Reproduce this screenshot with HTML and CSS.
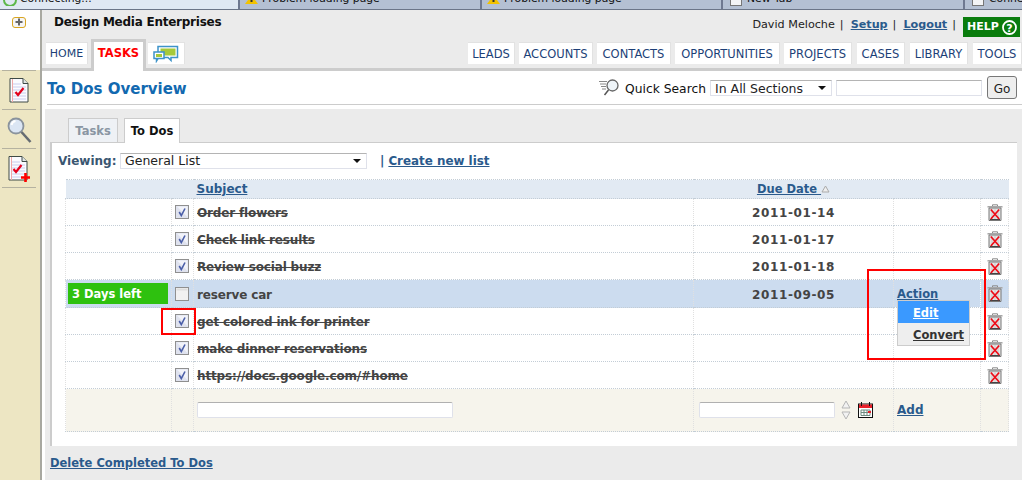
FILE: index.html
```html
<!DOCTYPE html>
<html lang="en">
<head>
<meta charset="utf-8">
<title>To Dos Overview</title>
<link rel="stylesheet" href="styles.css">
</head>
<body>
<svg class="defs" width="0" height="0" aria-hidden="true">
  <defs>
    <symbol id="trash" viewBox="0 0 16 17">
      <path d="M5.500 2V.8h5V2" fill="none" stroke="#8a8a8a"/>
      <rect x=".5" y="2" width="15" height="1.600" fill="#a8a8a8"/>
      <path d="M2 4h12v12.500H2z" fill="#e6e6e6" stroke="#777"/>
      <path d="M5 5v10M8 5v10M11 5v10" stroke="#cacaca"/>
      <path d="M3 15.500h10" stroke="#444"/>
      <path d="M3.800 5.500l8.400 9.500M12.200 5.500l-8.400 9.500" stroke="#ee0b16" stroke-width="1.700"/>
    </symbol>
    <symbol id="check" viewBox="0 0 14 14">
      <rect x=".5" y=".5" width="13" height="13" fill="#dfe2ee" stroke="#8f8f8f"/>
      <path d="M2 1.500h10.500v10.500z" fill="#f2f3f9"/>
      <path d="M4.200 7l2.100 3.500L10 3.500" fill="none" stroke="#4a5ea8" stroke-width="1.600"/>
    </symbol>
    <symbol id="uncheck" viewBox="0 0 14 14">
      <rect x=".5" y=".5" width="13" height="13" fill="#f1f1f1" stroke="#8f8f8f"/>
      <path d="M1.500 1.500h11v2h-11z" fill="#dedede"/>
    </symbol>
    <symbol id="sheet" viewBox="0 0 20 25">
      <path d="M1 .5h13l5 5v18.500H1z" fill="#fbfbff" stroke="#3f4a46"/>
      <path d="M14 .5v5h5" fill="#dfe4e4" stroke="#3f4a46"/>
      <path d="M3 6h9M3 9h14M3 12h14M3 15h14M3 18h14M3 21h14" stroke="#c9cdee"/>
      <path d="M3.500 1v23" stroke="#f0a8a8"/>
    </symbol>
  </defs>
</svg>

<div class="browser-tabs">
  <div class="btab btab-active">
    <svg class="b-icon" viewBox="0 0 14 6"><path d="M1 0a6 6 0 0 0 12 0" fill="none" stroke="#5cb84a" stroke-width="2"/></svg>
    <span>Connecting...</span>
  </div>
  <div class="btab btab-wide">
    <svg class="b-warn" viewBox="0 0 13 4"><path d="M3 0h7l3 4H0z" fill="#f2c200"/><rect x="5.500" width="2" height="2" fill="#333"/></svg>
    <span>Problem loading page</span>
  </div>
  <div class="btab">
    <svg class="b-warn" viewBox="0 0 13 4"><path d="M3 0h7l3 4H0z" fill="#f2c200"/><rect x="5.500" width="2" height="2" fill="#333"/></svg>
    <span>Problem loading page</span>
  </div>
  <div class="btab btab-wide">
    <i class="b-page"></i>
    <span>New Tab</span>
  </div>
  <div class="btab btab-last">
    <i class="b-page"></i>
    <span>Connecting...</span>
  </div>
</div>

<div class="app">
  <aside class="sidebar">
    <div class="side-top">
      <span class="plus-box"><svg viewBox="0 0 14 10" width="14" height="10"><path d="M3.500 5h7M7 1.500v7" stroke="#666" stroke-width="2"/></svg></span>
    </div>
    <div class="side-item">
      <svg width="20" height="25"><use href="#sheet"/><path d="M6.500 14l2.500 3 5.500-7" fill="none" stroke="#e3001b" stroke-width="2.200"/></svg>
    </div>
    <div class="side-item">
      <svg width="25" height="27" viewBox="0 0 25 27"><circle cx="9" cy="9" r="7.500" fill="#dbe6f4" stroke="#8a939c" stroke-width="1.800"/><path d="M4.500 8a5 5 0 0 1 4-4" fill="none" stroke="#fff" stroke-width="2"/><path d="M14.500 15l9 10" stroke="#666c72" stroke-width="2.600"/></svg>
    </div>
    <div class="side-item">
      <svg width="20" height="25" class="side-new"><use href="#sheet"/><path d="M5.500 13l2.500 3 5.500-7" fill="none" stroke="#e3001b" stroke-width="2.200"/></svg>
      <svg class="side-plus" width="9" height="9" viewBox="0 0 9 9"><path d="M4.500 0v9M0 4.500h9" stroke="#f00" stroke-width="2.600"/></svg>
    </div>
  </aside>

  <main class="main">
    <header class="head">
      <div class="head-top">
        <div class="company">Design Media Enterprises</div>
        <div class="user">
          <span>David Meloche</span><span class="pipe">|</span>
          <a href="#" class="link">Setup</a><span class="pipe">|</span>
          <a href="#" class="link">Logout</a><span class="pipe">|</span>
          <a href="#" class="help">HELP <svg width="15" height="15" viewBox="0 0 15 15"><circle cx="7.500" cy="7.500" r="6.500" fill="none" stroke="#fff" stroke-width="1.800"/><text x="7.500" y="11.500" text-anchor="middle" class="help-q">?</text></svg></a>
        </div>
      </div>
      <nav class="nav">
        <div class="nav-left">
          <a href="#" class="nt nt-home">HOME</a>
          <a href="#" class="nt-current">TASKS</a>
          <a href="#" class="nt nt-chat">
            <svg width="26" height="18" viewBox="0 0 26 18"><path d="M5 1.500h19.500v11H18v3l-3-3H5z" fill="#fff" stroke="#3d93c9" stroke-width="1.500"/><rect x="7.500" y="3.500" width="15" height="7" fill="#a6c93a"/><path d="M1 7h10v6.500H5l-1.500 2.500v-2.500H1z" fill="#fff" stroke="#3d93c9" stroke-width="1.500"/><rect x="3" y="9" width="6" height="3" fill="#a6c93a"/></svg>
          </a>
        </div>
        <div class="nav-right">
          <a href="#" class="nt w-leads">LEADS</a>
          <a href="#" class="nt w-accounts">ACCOUNTS</a>
          <a href="#" class="nt w-contacts">CONTACTS</a>
          <a href="#" class="nt w-opps">OPPORTUNITIES</a>
          <a href="#" class="nt w-projects">PROJECTS</a>
          <a href="#" class="nt w-cases">CASES</a>
          <a href="#" class="nt w-library">LIBRARY</a>
          <a href="#" class="nt w-tools">TOOLS</a>
        </div>
      </nav>
    </header>

    <section class="titlebar">
      <h1>To Dos Overview</h1>
      <div class="quick">
        <svg class="q-icon" width="21" height="17" viewBox="0 0 21 17"><circle cx="13.500" cy="6.500" r="5.500" fill="#eef4f8" stroke="#666" stroke-width="1.300"/><path d="M9.500 11l-4 5" stroke="#555" stroke-width="1.500"/><path d="M0 2.500h8M1 5h6M2 7.500h5M3 10h4" stroke="#888"/></svg>
        <span class="q-label">Quick Search</span>
        <div class="fake-select q-select"><span>In All Sections</span><i class="caret"></i></div>
        <input class="q-input" type="text">
        <button class="go" type="button">Go</button>
      </div>
    </section>

    <section class="content">
      <div class="subtabs">
        <a href="#" class="st">Tasks</a>
        <a href="#" class="st st-on">To Dos</a>
      </div>
      <div class="panel">
        <div class="viewing">
          <span class="v-label">Viewing:</span>
          <div class="fake-select v-select"><span>General List</span><i class="caret"></i></div>
          <span class="v-sep">|</span>
          <a href="#" class="link create">Create new list</a>
        </div>

        <table class="todos">
          <colgroup>
            <col class="c1"><col class="c2"><col class="c3"><col class="c4"><col class="c5"><col class="c6">
          </colgroup>
          <thead>
            <tr>
              <th></th><th></th>
              <th class="left"><a href="#" class="link strong">Subject</a></th>
              <th><a href="#" class="link due">Due Date <svg width="9" height="8" viewBox="0 0 9 8"><path d="M4.500 1L8 7H1z" fill="#eee" stroke="#aaa"/></svg></a></th>
              <th></th><th></th>
            </tr>
          </thead>
          <tbody>
            <tr>
              <td></td><td class="mid"><svg class="cb" width="14" height="14"><use href="#check"/></svg></td>
              <td class="subj done">Order flowers</td><td class="date">2011-01-14</td><td></td>
              <td class="mid"><svg class="tr" width="16" height="17"><use href="#trash"/></svg></td>
            </tr>
            <tr>
              <td></td><td class="mid"><svg class="cb" width="14" height="14"><use href="#check"/></svg></td>
              <td class="subj done">Check link results</td><td class="date">2011-01-17</td><td></td>
              <td class="mid"><svg class="tr" width="16" height="17"><use href="#trash"/></svg></td>
            </tr>
            <tr>
              <td></td><td class="mid"><svg class="cb" width="14" height="14"><use href="#check"/></svg></td>
              <td class="subj done">Review social buzz</td><td class="date">2011-01-18</td><td></td>
              <td class="mid"><svg class="tr" width="16" height="17"><use href="#trash"/></svg></td>
            </tr>
            <tr class="hot">
              <td class="days-cell"><div class="days">3 Days left</div></td>
              <td class="mid"><svg class="cb" width="14" height="14"><use href="#uncheck"/></svg></td>
              <td class="subj">reserve car</td><td class="date">2011-09-05</td>
              <td class="action">
                <a href="#" class="link due">Action</a>
                <div class="menu">
                  <a href="#" class="menu-item menu-on">Edit</a>
                  <a href="#" class="menu-item">Convert</a>
                </div>
              </td>
              <td class="mid"><svg class="tr" width="16" height="17"><use href="#trash"/></svg></td>
            </tr>
            <tr>
              <td></td><td class="mid"><svg class="cb" width="14" height="14"><use href="#check"/></svg></td>
              <td class="subj done">get colored ink for printer</td><td class="date"></td><td></td>
              <td class="mid"><svg class="tr" width="16" height="17"><use href="#trash"/></svg></td>
            </tr>
            <tr>
              <td></td><td class="mid"><svg class="cb" width="14" height="14"><use href="#check"/></svg></td>
              <td class="subj done">make dinner reservations</td><td class="date"></td><td></td>
              <td class="mid"><svg class="tr" width="16" height="17"><use href="#trash"/></svg></td>
            </tr>
            <tr>
              <td></td><td class="mid"><svg class="cb" width="14" height="14"><use href="#check"/></svg></td>
              <td class="subj done">https://docs.google.com/#home</td><td class="date"></td><td></td>
              <td class="mid"><svg class="tr" width="16" height="17"><use href="#trash"/></svg></td>
            </tr>
            <tr class="addrow">
              <td></td><td></td>
              <td><input class="add-subj" type="text"></td>
              <td class="add-date">
                <input class="add-due" type="text">
                <svg class="swap" width="10" height="20" viewBox="0 0 10 20"><path d="M5 1L1 8h8zM1 12h8l-4 7z" fill="#f2f2f2" stroke="#b5b5b5"/></svg>
                <svg class="cal" width="15" height="16" viewBox="0 0 15 16"><rect x=".5" y="2" width="14" height="13.500" fill="#fff" stroke="#111"/><rect x="1" y="2.500" width="13" height="3.500" fill="#e8202a"/><path d="M3.500 0v4M11.500 0v4" stroke="#111"/><path d="M3 8h9v5.500H3zM3 10.500h9M6 8v5.500M9 8v5.500" fill="none" stroke="#6d8a80"/><rect x="10" y="9" width="3" height="2" fill="#e8202a"/></svg>
              </td>
              <td class="add-cell"><a href="#" class="link strong">Add</a></td>
              <td></td>
            </tr>
          </tbody>
        </table>
      </div>
      <div class="foot"><a href="#" class="link due">Delete Completed To Dos</a></div>
    </section>
  </main>
</div>

<div class="mark mark-check"></div>
<div class="mark mark-action"></div>
</body>
</html>
```

FILE: styles.css
```css
* { box-sizing: border-box; }
html, body { margin: 0; padding: 0; height: 480px; overflow: hidden; background: #ebebeb; }
body { position: relative; font-family: "DejaVu Sans", Verdana, sans-serif; font-size: 11px; color: #222; }
.defs { position: absolute; }
a { color: inherit; text-decoration: none; }

.browser-tabs { display: flex; height: 10px; overflow: hidden; background: #b4c0d3; border-bottom: 1px solid #6b7588; font-size: 10.800px; color: #111; }
.btab { flex: none; width: 241px; height: 9px; display: flex; align-items: flex-start; gap: 4px; padding-left: 5px; border-left: 2px solid #6e7890; white-space: nowrap; overflow: hidden; }
.btab span { display: block; margin-top: -9px; line-height: 16px; }
.btab-wide { width: 242px; }
.btab-active { width: 238px; padding-left: 3px; gap: 3px; border-left: 0; background: #dfe8f3; }
.btab-last { flex: 1; }
.b-icon { flex: none; width: 14px; height: 6px; }
.b-warn { flex: none; width: 13px; height: 4px; }
.b-page { display: block; flex: none; width: 12px; height: 6px; margin: 0 1px 0 2px; background: #f3f4f6; border: 1px solid #777; border-top: 0; }

.app { display: flex; height: 470px; }
.sidebar { flex: none; width: 42px; background: #ede6c3; border-right: 2px solid #a8a8a0; }
.side-top { height: 60px; background: #fff; padding: 7px 0 0 12px; }
.plus-box { display: block; width: 14px; height: 11px; border: 1px solid #d9a520; border-radius: 3px; background: #f5f5f5; line-height: 0; }
.plus-box svg { margin: -1px 0 0 -1px; }
.side-item { position: relative; height: 39px; margin: 0 4px 0 2px; border-top: 1px solid #b5b2a0; display: flex; justify-content: center; padding-top: 7px; }
.side-item:last-child { height: 40px; border-bottom: 1px solid #b5b2a0; }
.side-new { margin-left: -2px; }
.side-plus { position: absolute; left: 19px; top: 24px; }

.main { flex: 1; display: flex; flex-direction: column; min-width: 0; background: #fff; }
.head { height: 61px; background: #ebebeb; border-bottom: 3px solid #ccc; }
.head-top { display: flex; justify-content: space-between; height: 30px; padding: 5px 2px 0 12px; }
.company { font-weight: 700; font-size: 12px; letter-spacing: -.25px; color: #111; line-height: 14px; }
.user { display: flex; font-size: 11.200px; line-height: 14px; padding-top: 3px; color: #222; }
.pipe { margin: 0 7px 0 5px; }
.link { color: #2a5a8c; text-decoration: underline; font-weight: 700; }
.user .link { font-size: 11.200px; }
.strong { font-size: 12px; }
.create { font-size: 11.900px; }
.due { font-size: 11.500px; }
.help { display: flex; align-items: center; gap: 3px; width: 57px; height: 20px; margin: -1px 0 0 0; padding-left: 4px; background: #0a7c0d; color: #fff; text-decoration: none; font-weight: 700; font-size: 11px; }
.help-q { fill: #fff; font-size: 11px; font-weight: 700; font-family: "DejaVu Sans", sans-serif; }

.nav { display: flex; justify-content: space-between; align-items: flex-start; height: 28px; padding-left: 4px; }
.nav-left, .nav-right { display: flex; }
.nt { display: flex; align-items: center; justify-content: center; height: 22px; margin-top: 2px; background: #fff; border: 1px solid #e2e2e2; border-width: 1px 1px 0 0; color: #1c3f77; font-size: 11.500px; }
.nt-home { width: 42px; margin-right: 3px; font-size: 11px; }
.nt-current { display: flex; justify-content: center; width: 55px; height: 32px; padding-top: 4px; margin-top: -1px; background: #fff; border: 3px solid #ccc; border-bottom: 0; color: #f00; font-weight: 700; font-size: 11.500px; position: relative; }
.nt-chat { width: 37px; margin-left: 2px; }
.w-leads { width: 47px; margin-right: 4px; }
.w-accounts { width: 74px; margin-right: 4px; }
.w-contacts { width: 74px; margin-right: 4px; }
.w-opps { width: 105px; margin-right: 4px; }
.w-projects { width: 68px; margin-right: 5px; }
.w-cases { width: 48px; margin-right: 5px; }
.w-library { width: 58px; margin-right: 5px; }
.w-tools { width: 49px; }

.titlebar { display: flex; justify-content: space-between; align-items: center; height: 34px; margin: 0 0 0 5px; padding-right: 5px; border-bottom: 1px solid #ccc; }
h1 { margin: 3px 0 0; color: #1269b0; font-size: 15px; font-weight: 700; }
.quick { display: flex; align-items: center; gap: 4px; font-size: 12px; color: #111; }
.q-icon { margin-right: 1px; }
.q-label { font-size: 12.300px; padding-top: 2px; }
.fake-select { display: flex; justify-content: space-between; align-items: center; height: 16px; background: #fff; border: 1px solid #dfe1ea; border-top-color: #b4b4b4; padding: 0 5px 0 4px; font-size: 12.500px; color: #222; }
.q-select { width: 122px; padding-top: 1px; }
.v-select { width: 247px; }
.caret { width: 0; height: 0; border: 4px solid transparent; border-top: 4px solid #111; border-bottom: 0; }
.q-input { width: 146px; height: 16px; margin: 0; border: 1px solid #dfe1ea; border-top-color: #b4b4b4; background: #fff; }
.go { width: 30px; height: 23px; margin: 0 0 0 1px; padding: 3px 0 0; background: #eee; border: 1px solid #777; border-radius: 3px; font: 12px "DejaVu Sans", sans-serif; color: #222; }

.content { flex: 1; margin: 4px 0 0 3px; padding-left: 5px; background: #ebebeb; }
.subtabs { display: flex; gap: 6px; height: 33px; padding: 9px 0 0 18px; }
.st { display: flex; align-items: center; justify-content: center; width: 50px; height: 24px; background: #eef1f5; border: 1px solid #ccc; border-bottom: 0; color: #8a96a3; font-weight: 700; font-size: 11.500px; }
.st-on { position: relative; width: 56px; height: 25px; background: #fff; color: #111; z-index: 1; }
.panel { width: 967px; height: 304px; padding-top: 10px; background: #fff; border-left: 2px solid #ccc; border-top: 1px solid #ccc; }
.viewing { display: flex; align-items: center; height: 15px; padding-left: 6px; font-size: 12px; }
.v-label { width: 62px; font-weight: 700; color: #3a5670; }
.v-sep { margin: 0 4px 0 13px; color: #2a5a8c; font-weight: 700; }

.todos { width: 943px; margin: 11px 0 0 13px; border-collapse: collapse; table-layout: fixed; font-size: 12px; }
.c1 { width: 106px; } .c2 { width: 22px; } .c3 { width: 500px; } .c4 { width: 200px; } .c5 { width: 87px; } .c6 { width: 28px; }
.todos th, .todos td { padding: 0; border-style: dotted; border-width: 1px; border-color: #c3cdd6 #e0e0e0; height: 27px; }
.todos th { height: 19px; background: #e2eaf3; text-align: center; border-left: 0; border-right: 0; font-weight: 700; }
.todos th.left { text-align: left; padding-left: 3px; }
.todos th svg { vertical-align: 0; }
.todos .subj { padding: 2px 0 0 3px; font-weight: 700; color: #444; letter-spacing: -.15px; }
.done { text-decoration: line-through; }
.todos .date { padding-top: 2px; text-align: center; font-weight: 700; color: #444; letter-spacing: .6px; }
.mid { text-align: center; line-height: 0; }
.cb { vertical-align: middle; margin-right: 1px; }
.tr { vertical-align: middle; }
.hot td { background: #ccdcef; height: 28px; }
.todos .days-cell { padding: 0 0 0 2px; }
.days { height: 21px; line-height: 22px; width: 100px; padding-left: 4px; background: #2ec10f; color: #fff; font-weight: 700; font-size: 11.500px; }
.todos .action { position: relative; padding: 1px 0 0 3px; }
.menu { position: absolute; left: 3px; top: 20px; width: 73px; height: 46px; background: #eee; border: 1px solid #ccc; z-index: 2; }
.menu-item { display: block; height: 22px; line-height: 25px; padding-left: 15px; color: #333; text-decoration: underline; font-weight: 700; font-size: 11.500px; }
.menu-on { background: #3a99ff; color: #fff; }
.addrow td { height: 43px; background: #f6f4ec; }
.add-subj { display: block; width: 256px; height: 16px; margin: 0 0 0 3px; background: #fff; border: 1px solid #dfe1ea; border-top-color: #b0b0b0; border-radius: 2px; }
.todos .add-date { white-space: nowrap; line-height: 0; padding-left: 5px; }
.add-due { width: 136px; height: 16px; margin: 0; vertical-align: middle; background: #fff; border: 1px solid #dfe1ea; border-top-color: #b0b0b0; border-radius: 2px; }
.swap { vertical-align: middle; margin-left: 2px; }
.cal { vertical-align: middle; margin-left: 3px; }
.todos .add-cell { padding-left: 3px; }
.foot { padding: 10px 0 0 0; }

.mark { position: absolute; border: 2px solid #f00; z-index: 5; pointer-events: none; }
.mark-check { left: 161px; top: 308px; width: 35px; height: 27px; }
.mark-action { left: 867px; top: 269px; width: 119px; height: 91px; }
```
